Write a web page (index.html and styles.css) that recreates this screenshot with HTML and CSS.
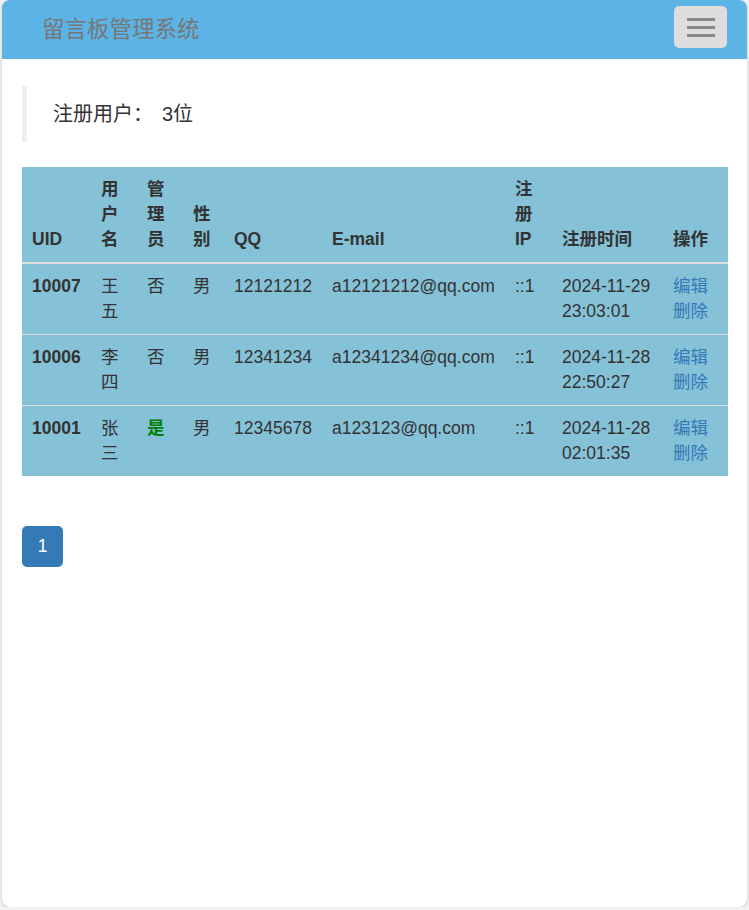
FILE: index.html
```html
<!DOCTYPE html>
<html lang="zh-CN">
<head>
<meta charset="utf-8">
<title>留言板管理系统</title>
<link rel="stylesheet" href="styles.css">
</head>
<body>
<div class="card">
  <nav class="navbar">
    <span class="brand">留言板管理系统</span>
    <button class="toggle" type="button" aria-label="菜单">
      <span class="bar"></span><span class="bar"></span><span class="bar"></span>
    </button>
  </nav>
  <main class="content">
    <blockquote class="summary">注册用户<span class="colon">：</span>3位</blockquote>
    <table class="users">
      <thead>
        <tr>
          <th class="c1">UID</th>
          <th class="c2">用户名</th>
          <th class="c3">管理员</th>
          <th class="c4">性别</th>
          <th class="c5">QQ</th>
          <th class="c6">E-mail</th>
          <th class="c7">注册IP</th>
          <th class="c8">注册时间</th>
          <th class="c9">操作</th>
        </tr>
      </thead>
      <tbody>
        <tr>
          <td class="uid">10007</td>
          <td>王五</td>
          <td>否</td>
          <td>男</td>
          <td>12121212</td>
          <td>a12121212@qq.com</td>
          <td>::1</td>
          <td>2024-11-29 23:03:01</td>
          <td><a href="#">编辑</a> <a href="#">删除</a></td>
        </tr>
        <tr>
          <td class="uid">10006</td>
          <td>李四</td>
          <td>否</td>
          <td>男</td>
          <td>12341234</td>
          <td>a12341234@qq.com</td>
          <td>::1</td>
          <td>2024-11-28 22:50:27</td>
          <td><a href="#">编辑</a> <a href="#">删除</a></td>
        </tr>
        <tr>
          <td class="uid">10001</td>
          <td>张三</td>
          <td><b class="yes">是</b></td>
          <td>男</td>
          <td>12345678</td>
          <td>a123123@qq.com</td>
          <td>::1</td>
          <td>2024-11-28 02:01:35</td>
          <td><a href="#">编辑</a> <a href="#">删除</a></td>
        </tr>
      </tbody>
    </table>
    <ul class="pagination">
      <li><a href="#" class="active">1</a></li>
    </ul>
  </main>
</div>
</body>
</html>
```

FILE: styles.css
```css
html, body {
  margin: 0;
  padding: 0;
}
body {
  background: #f2f2f2;
  font-family: "Liberation Sans", Arial, "Noto Sans CJK SC", sans-serif;
  font-size: 17.5px;
  line-height: 25px;
  color: #333;
}
.card {
  margin: 0 2px 0 2px;
  height: 907px;
  background: #fff;
  border-radius: 8px;
  box-shadow: 0 1px 3px rgba(0, 0, 0, 0.22);
  overflow: hidden;
}
.navbar {
  height: 59px;
  background: #5bb4e5;
  display: flex;
  align-items: flex-start;
  justify-content: space-between;
  padding: 0 20px 0 40px;
}
.brand {
  font-family: "Noto Sans CJK SC", sans-serif;
  font-size: 22.5px;
  line-height: 54px;
  color: #777;
}
.toggle {
  margin-top: 6px;
  width: 53px;
  height: 42px;
  background: #ddd;
  border: none;
  border-radius: 5px;
  padding: 0;
  display: flex;
  flex-direction: column;
  align-items: center;
  justify-content: center;
  gap: 5px;
}
.bar {
  display: block;
  width: 28px;
  height: 3px;
  background: #888;
}
.content {
  padding: 27px 19px 0 20px;
}
.summary {
  margin: 0 0 25px 0;
  border-left: 5px solid #eee;
  padding: 13px 26px 13px 26px;
  font-size: 20px;
  line-height: 30px;
}
.colon {
  display: inline-block;
  width: 29px;
}
.users {
  width: 706px;
  table-layout: fixed;
  border-collapse: collapse;
  border-spacing: 0;
  background: #85c1d7;
  margin: 0;
}
.users th,
.users td {
  box-sizing: border-box;
  padding: 10px;
  text-align: left;
  line-height: 25px;
}
.users th {
  vertical-align: bottom;
  font-weight: bold;
  border-bottom: 2px solid #ddd;
}
.users td {
  vertical-align: top;
  border-top: 1px solid #ddd;
}
.users tbody tr:first-child td {
  border-top: none;
}
.c1 { width: 69px; }
.c2 { width: 46px; }
.c3 { width: 46px; }
.c4 { width: 41px; }
.c5 { width: 98px; }
.c6 { width: 183px; }
.c7 { width: 47px; }
.c8 { width: 111px; }
.c9 { width: 65px; }
.uid {
  font-weight: bold;
}
.yes {
  color: #008000;
  font-weight: bold;
}
.users a {
  color: #337ab7;
  text-decoration: none;
}
.pagination {
  list-style: none;
  margin: 50px 0 0 0;
  padding: 0;
  display: flex;
}
.pagination a {
  display: block;
  width: 41px;
  height: 41px;
  box-sizing: border-box;
  text-align: center;
  line-height: 41px;
  border-radius: 5px;
  text-decoration: none;
}
.pagination a.active {
  background: #337ab7;
  color: #fff;
}
```
